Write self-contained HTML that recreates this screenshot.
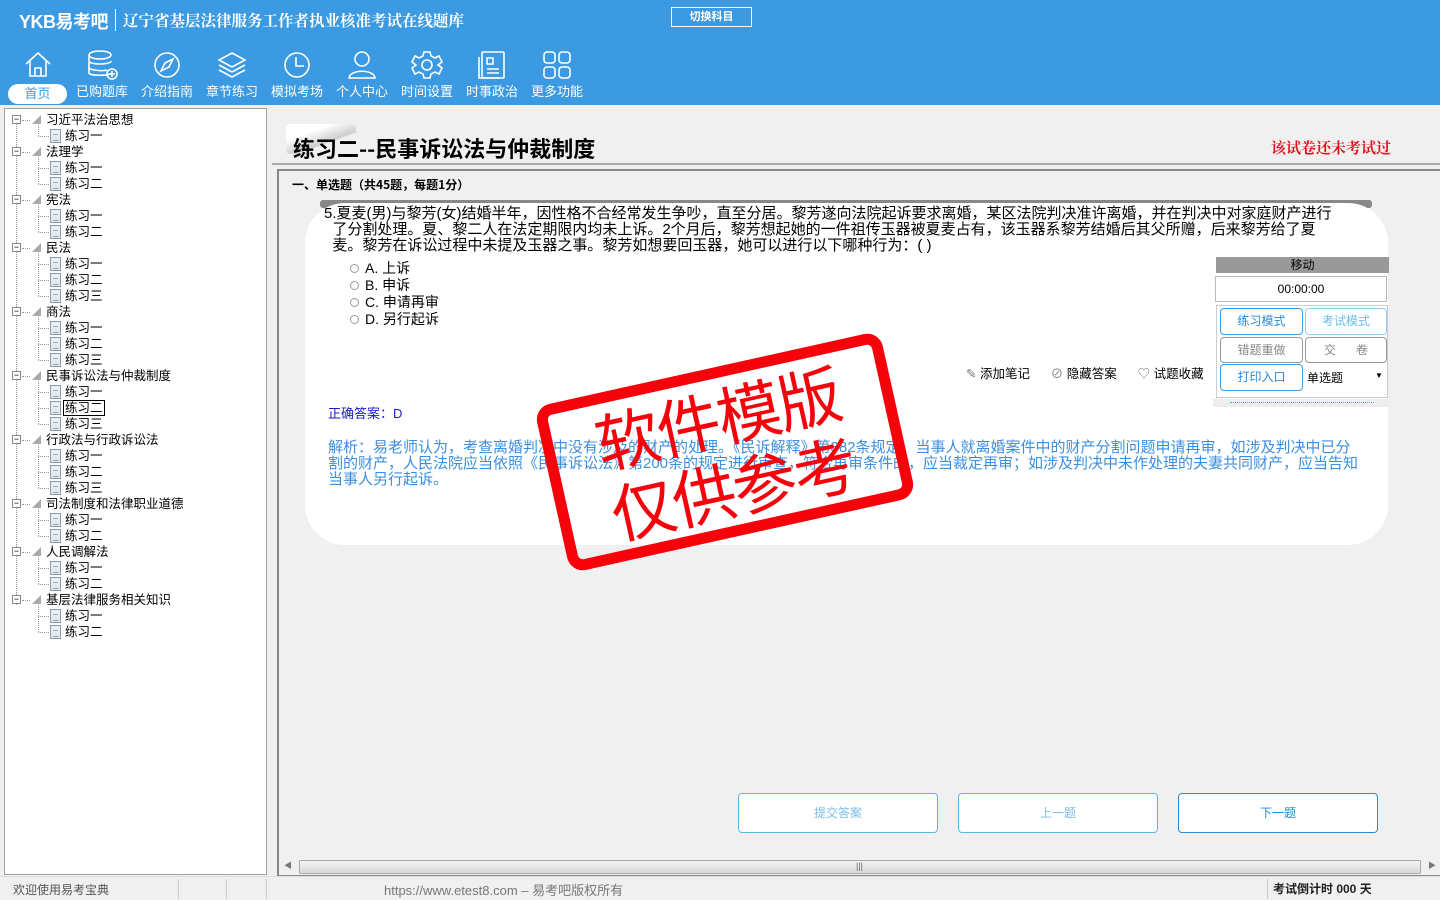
<!DOCTYPE html>
<html><head><meta charset="utf-8">
<style>
*{margin:0;padding:0;box-sizing:border-box}
body{width:1440px;height:900px;overflow:hidden;background:#f0f0f0;font-family:"Liberation Sans","Noto Sans CJK SC","WenQuanYi Zen Hei",sans-serif;position:relative;color:#000}
.a{position:absolute;white-space:nowrap}
#hdr{position:absolute;left:0;top:0;width:1440px;height:105px;background:#3b9ae1}
.nav{position:absolute;top:48px;width:62px;text-align:center;color:#fff;font-size:13px;line-height:16px}
.nav svg{display:block;margin:0 auto 2px;width:34px;height:34px}
.tree{position:absolute;left:4px;top:108px;width:263px;height:767px;background:#fff;border:1px solid #a0a0a0;font-size:12.5px}
.tn{position:absolute;left:41px;height:16px;line-height:16px}
.tl{position:absolute;left:60px;height:16px;line-height:16px}
.pm{position:absolute;left:7px;width:9px;height:9px;border:1px solid #888;background:#fff;font-size:9px;line-height:7px;text-align:center;color:#000}
.tri{position:absolute;left:27px;width:0;height:0;border-left:9px solid transparent;border-bottom:9px solid #a8a8a8}
.doc{position:absolute;left:45px;width:11px;height:14px;border:1px solid #8a9aa6;background:linear-gradient(#eef3f6,#dfe7ec)}
.doc:after{content:"";position:absolute;left:2px;right:2px;top:4px;height:5px;border-top:1px solid #9ab;border-bottom:1px solid #9ab}
.btn{position:absolute;background:#fff;border:1px solid #5bb8e6;border-radius:4px;text-align:center;font-size:12px}
.op{height:17px;line-height:17px;font-size:14px}
.rd{display:inline-block;width:9px;height:9px;border:1px solid #999;border-radius:50%;margin-right:6px;vertical-align:middle;position:relative;top:-1px}
</style></head><body>
<div id="hdr">
 <div class="a" style="left:19px;top:8px;color:#fff;font-size:18px;font-weight:bold;letter-spacing:-0.5px">YKB易考吧</div>
 <div class="a" style="left:115px;top:9px;width:1px;height:22px;background:#fff"></div>
 <div class="a" style="left:123px;top:9px;color:#fff;font-size:15.5px;font-weight:bold;font-family:'Noto Serif CJK SC',serif">辽宁省基层法律服务工作者执业核准考试在线题库</div>
 <div class="a" style="left:671px;top:7px;width:81px;height:20px;border:1px solid #fff;color:#fff;font-size:11px;font-weight:bold;text-align:center;line-height:18px">切换科目</div>
 <div class="a" style="left:8px;top:84px;width:59px;height:20px;background:#fff;border-radius:10px;color:#3b9ae1;font-size:13px;text-align:center;line-height:20px">首页</div>
 <div class="nav" style="left:7px"><svg viewBox="0 0 34 34" fill="none" stroke="#fff" stroke-width="1.6"><path d="M5 16 L17 5 L29 16 M9 13 V28 H25 V13 M14 28 V20 H20 V28"/></svg></div>
 <div class="nav" style="left:71px"><svg viewBox="0 0 34 34" fill="none" stroke="#fff" stroke-width="1.6"><ellipse cx="15" cy="7" rx="11" ry="4"/><path d="M4 7 V25 C4 28 26 28 26 25 M4 13 C4 17 26 17 26 13 M4 19 C4 23 20 23 22 22"/><circle cx="27" cy="26" r="5"/><path d="M27 23 V29 M24 26 H30"/></svg>已购题库</div>
 <div class="nav" style="left:136px"><svg viewBox="0 0 34 34" fill="none" stroke="#fff" stroke-width="1.6"><circle cx="17" cy="17" r="12"/><path d="M23 11 L15 15 L11 23 L19 19 Z"/></svg>介绍指南</div>
 <div class="nav" style="left:201px"><svg viewBox="0 0 34 34" fill="none" stroke="#fff" stroke-width="1.6"><path d="M17 5 L30 12 L17 19 L4 12 Z M4 17 L17 24 L30 17 M4 22 L17 29 L30 22"/></svg>章节练习</div>
 <div class="nav" style="left:266px"><svg viewBox="0 0 34 34" fill="none" stroke="#fff" stroke-width="1.6"><circle cx="17" cy="17" r="12"/><path d="M16 9 V18 H24"/></svg>模拟考场</div>
 <div class="nav" style="left:331px"><svg viewBox="0 0 34 34" fill="none" stroke="#fff" stroke-width="1.6"><circle cx="17" cy="11" r="7"/><path d="M4 30 C5 21 29 21 30 30 Z"/></svg>个人中心</div>
 <div class="nav" style="left:396px"><svg viewBox="0 0 34 34" fill="none" stroke="#fff" stroke-width="1.6"><path d="M14 4 H20 L21 8 L25 10 L29 8 L32 14 L28 17 L32 20 L29 26 L25 24 L21 26 L20 30 H14 L13 26 L9 24 L5 26 L2 20 L6 17 L2 14 L5 8 L9 10 L13 8 Z"/><circle cx="17" cy="17" r="5"/></svg>时间设置</div>
 <div class="nav" style="left:461px"><svg viewBox="0 0 34 34" fill="none" stroke="#fff" stroke-width="1.6"><rect x="7" y="4" width="22" height="26" rx="1"/><path d="M4 9 V30 H24 M12 10 H18 V16 H12 Z M12 21 H24 M12 25 H24"/></svg>时事政治</div>
 <div class="nav" style="left:526px"><svg viewBox="0 0 34 34" fill="none" stroke="#fff" stroke-width="1.6"><rect x="4" y="4" width="11" height="11" rx="3"/><rect x="19" y="4" width="11" height="11" rx="3"/><rect x="4" y="19" width="11" height="11" rx="3"/><rect x="19" y="19" width="11" height="11" rx="3"/></svg>更多功能</div>
</div>

<div class="tree">
 <div class="a" style="left:11px;top:8px;width:0;height:488px;border-left:1px dotted #999"></div>
 <div id="t"></div>
</div>

<!-- right -->
<div class="a" style="left:272px;top:105px;width:1168px;height:771px;background:#f0f0f0"></div>
<div class="a" style="left:286px;top:124px;width:70px;height:30px;background:linear-gradient(160deg,#fff 30%,#ccc 60%,transparent 62%);border-radius:4px"></div>
<div class="a" style="left:293px;top:132px;font-size:22px;font-weight:bold;font-family:'Noto Sans CJK SC','WenQuanYi Zen Hei',sans-serif;line-height:32px">练习二--民事诉讼法与仲裁制度</div>
<div class="a" style="left:1271px;top:137px;font-size:15px;font-weight:bold;color:#e0141e;font-family:'Noto Serif CJK SC',serif">该试卷还未考试过</div>
<div class="a" style="left:272px;top:163px;width:1168px;height:2px;background:#aaa"></div>
<div class="a" style="left:277px;top:169px;width:1163px;height:707px;border:2px solid #888;border-right:none;background:#f0f0f0"></div>
<div class="a" style="left:292px;top:176px;font-size:12px;font-weight:bold;font-family:'Noto Sans CJK SC',sans-serif">一、单选题（共45题，每题1分）</div>
<div class="a" style="left:320px;top:200px;width:1052px;height:8px;background:#888;border-radius:3px"></div>
<div class="a" style="left:305px;top:203px;width:1083px;height:342px;background:#fff;border-radius:40px"></div>
<div class="a" style="left:324px;top:206px;font-size:15px;line-height:16px">5.夏麦(男)与黎芳(女)结婚半年，因性格不合经常发生争吵，直至分居。黎芳遂向法院起诉要求离婚，某区法院判决准许离婚，并在判决中对家庭财产进行<br>&nbsp;&nbsp;了分割处理。夏、黎二人在法定期限内均未上诉。2个月后，黎芳想起她的一件祖传玉器被夏麦占有，该玉器系黎芳结婚后其父所赠，后来黎芳给了夏<br>&nbsp;&nbsp;麦。黎芳在诉讼过程中未提及玉器之事。黎芳如想要回玉器，她可以进行以下哪种行为：( )</div>
<div class="a" style="left:350px;top:260px">
 <div class="op"><span class="rd"></span>A. 上诉</div>
 <div class="op"><span class="rd"></span>B. 申诉</div>
 <div class="op"><span class="rd"></span>C. 申请再审</div>
 <div class="op"><span class="rd"></span>D. 另行起诉</div>
</div>
<div class="a" style="left:966px;top:363px;font-size:12.5px;color:#000;word-spacing:0"><span style="color:#777">✎</span> 添加笔记&nbsp;&nbsp;&nbsp;&nbsp;&nbsp;&nbsp;<span style="color:#777">⊘</span> 隐藏答案&nbsp;&nbsp;&nbsp;&nbsp;&nbsp;&nbsp;<span style="color:#777">♡</span> 试题收藏</div>
<div class="a" style="left:328px;top:403px;font-size:13px;color:#1a1acd">正确答案：D</div>
<div class="a" style="left:328px;top:440px;font-size:15px;line-height:16px;color:#3b8fe0">解析：易老师认为，考查离婚判决中没有涉及的财产的处理。《民诉解释》第382条规定，当事人就离婚案件中的财产分割问题申请再审，如涉及判决中已分<br>割的财产，人民法院应当依照《民事诉讼法》第200条的规定进行审查，符合再审条件的，应当裁定再审；如涉及判决中未作处理的夫妻共同财产，应当告知<br>当事人另行起诉。</div>

<!-- side panel -->
<div class="a" style="left:1216px;top:257px;width:173px;height:16px;background:#999;color:#000;font-size:12px;text-align:center;line-height:16px">移动</div>
<div class="a" style="left:1215px;top:276px;width:172px;height:26px;background:#fff;border:1px solid #bbb;font-size:12px;text-align:center;line-height:24px">00:00:00</div>
<div class="a" style="left:1216px;top:305px;width:172px;height:93px;background:#fff;border:1px solid #ccc"></div>
<div class="btn" style="left:1220px;top:308px;width:83px;height:27px;line-height:25px;color:#2a8ad0;border-color:#3aa0e0">练习模式</div>
<div class="btn" style="left:1305px;top:308px;width:82px;height:27px;line-height:25px;color:#6cbde8;border-color:#8fd0f0">考试模式</div>
<div class="btn" style="left:1220px;top:337px;width:83px;height:26px;line-height:24px;color:#888;border-color:#999">错题重做</div>
<div class="btn" style="left:1305px;top:337px;width:82px;height:26px;line-height:24px;color:#888;border-color:#999">交&nbsp;&nbsp;&nbsp;&nbsp;&nbsp;&nbsp;卷</div>
<div class="btn" style="left:1220px;top:364px;width:83px;height:27px;line-height:25px;color:#2a8ad0;border-color:#3aa0e0">打印入口</div>
<div class="a" style="left:1307px;top:369px;font-size:12px">单选题</div>
<div class="a" style="left:1375px;top:371px;font-size:8px">▼</div>
<div class="a" style="left:1213px;top:399px;width:178px;height:8px;background:#eee"></div>
<div class="a" style="left:1230px;top:402px;width:144px;border-top:1px dotted #5ab"></div>

<!-- bottom buttons -->
<div class="btn" style="left:738px;top:793px;width:200px;height:40px;line-height:38px;color:#7bbde6">提交答案</div>
<div class="btn" style="left:958px;top:793px;width:200px;height:40px;line-height:38px;color:#7bbde6">上一题</div>
<div class="btn" style="left:1178px;top:793px;width:200px;height:40px;line-height:38px;color:#2a8ad0;border-color:#2a8ad0">下一题</div>

<!-- scrollbar -->
<div class="a" style="left:279px;top:858px;width:1161px;height:17px;background:#f0f0f0"></div>
<div class="a" style="left:284px;top:860px;font-size:8px;color:#777">◀</div>
<div class="a" style="left:1428px;top:860px;font-size:8px;color:#777">▶</div>
<div class="a" style="left:299px;top:860px;width:1122px;height:14px;border:1px solid #aaa;border-radius:2px;background:linear-gradient(#f4f4f4,#d8d8d8)"></div>
<div class="a" style="left:856px;top:861px;font-size:9px;color:#666">|||</div>

<!-- status -->
<div class="a" style="left:0;top:876px;width:1440px;height:24px;background:#f0f0f0;border-top:1px solid #ddd"></div>
<div class="a" style="left:13px;top:881px;font-size:12px;color:#555">欢迎使用易考宝典</div>
<div class="a" style="left:178px;top:879px;width:1px;height:20px;background:#ccc"></div>
<div class="a" style="left:226px;top:879px;width:1px;height:20px;background:#ccc"></div>
<div class="a" style="left:266px;top:879px;width:1px;height:20px;background:#ccc"></div>
<div class="a" style="left:384px;top:880px;font-size:13px;color:#777">https://www.etest8.com – 易考吧版权所有</div>
<div class="a" style="left:1267px;top:879px;width:1px;height:20px;background:#ccc"></div>
<div class="a" style="left:1273px;top:880px;font-size:12px;font-weight:bold;color:#222">考试倒计时 000 天</div>

<!-- stamp -->
<div class="a" style="left:548px;top:367px;width:354px;height:170px;border:11px solid #f5020a;border-radius:16px;transform:rotate(-12.5deg);color:#f5020a;font-size:64px;line-height:72px;text-align:center;padding-top:6px;letter-spacing:-2px">软件模版<br>仅供参考</div>

<script>
var d=[["习近平法治思想",1],["法理学",2],["宪法",2],["民法",3],["商法",3],["民事诉讼法与仲裁制度",3],["行政法与行政诉讼法",3],["司法制度和法律职业道德",2],["人民调解法",2],["基层法律服务相关知识",2]];
var n=["练习一","练习二","练习三"],h="",y=3;
d.forEach(function(c,ci){
 h+='<div class="pm" style="top:'+(y+3)+'px">−</div><div class="a" style="left:17px;top:'+(y+8)+'px;width:8px;border-top:1px dotted #999"></div><div class="tri" style="top:'+(y+3)+'px"></div><div class="tn" style="top:'+y+'px">'+c[0]+'</div>';
 var sy=y;y+=16;
 for(var i=0;i<c[1];i++){
  var sel=(ci==5&&i==1);
  h+='<div class="a" style="left:33px;top:'+(y+8)+'px;width:11px;border-top:1px dotted #999"></div><div class="doc" style="top:'+(y+1)+'px"></div><div class="tl" style="top:'+y+'px;'+(sel?'border:1px solid #000;padding:0 1px;left:58px;line-height:14px':'')+'">'+n[i]+'</div>';
  y+=16;
 }
 h+='<div class="a" style="left:33px;top:'+(sy+13)+'px;height:'+(y-sy-21)+'px;border-left:1px dotted #999"></div>';
});
document.getElementById('t').innerHTML=h;
</script>
</body></html>
